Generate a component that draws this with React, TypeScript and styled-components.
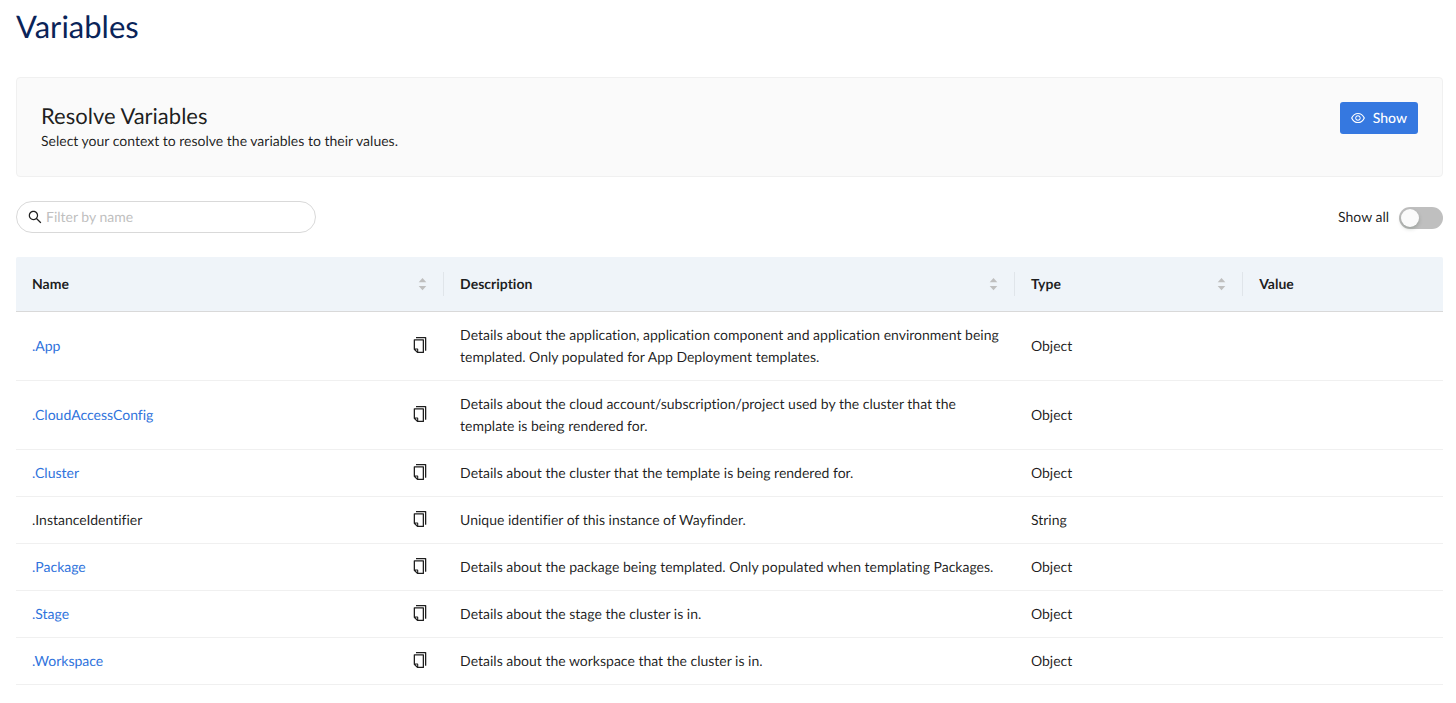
import React, { useState } from "react";
import styled, { createGlobalStyle } from "styled-components";

const GlobalStyle = createGlobalStyle`
  *, *::before, *::after { box-sizing: border-box; }
  body {
    margin: 0;
    background: #fff;
    color: rgba(0, 0, 0, 0.88);
    font-family: Lato, "Liberation Sans", sans-serif;
    font-size: 14px;
    line-height: 22px;
    text-rendering: geometricPrecision;
    font-variant-ligatures: no-common-ligatures;
  }
`;

const Page = styled.main`
  padding: 7px 13px 18px 16px;
`;

const Title = styled.h1`
  margin: 0 0 32px;
  color: #0a2459;
  font-size: 31px;
  font-weight: 400;
  line-height: 38px;
`;

const Panel = styled.section`
  display: flex;
  justify-content: space-between;
  align-items: flex-start;
  padding: 24px;
  border: 1px solid #f0f0f0;
  border-radius: 4px;
  background: #fafafa;
`;

const PanelTitle = styled.h2`
  margin: 0;
  font-size: 22px;
  font-weight: 400;
  line-height: 28px;
`;

const PanelText = styled.p`
  margin: 0;
`;

const PrimaryButton = styled.button`
  display: flex;
  align-items: center;
  gap: 8px;
  height: 32px;
  padding: 0 11px;
  border: 0;
  border-radius: 3px;
  background: #3578e0;
  color: #fff;
  font: inherit;
  font-weight: 500;
  text-rendering: inherit;
  cursor: pointer;
`;

const Toolbar = styled.div`
  display: flex;
  justify-content: space-between;
  align-items: center;
  margin: 24px 0;
`;

const SearchBox = styled.label`
  display: flex;
  align-items: center;
  gap: 4px;
  width: 300px;
  height: 32px;
  padding: 0 11px;
  border: 1px solid #d9d9d9;
  border-radius: 16px;
`;

const SearchInput = styled.input`
  flex: 1;
  min-width: 0;
  padding: 0;
  border: 0;
  outline: 0;
  background: transparent;
  color: inherit;
  font: inherit;
  text-rendering: inherit;

  &::placeholder {
    color: #bfbfbf;
    opacity: 1;
  }
`;

const SwitchLabel = styled.label`
  display: flex;
  align-items: center;
  gap: 10px;
`;

const Switch = styled.input`
  appearance: none;
  width: 44px;
  height: 22px;
  margin: 2px 0 0;
  padding: 2px;
  border-radius: 11px;
  background: #bfbfbf;
  cursor: pointer;

  &::before {
    content: "";
    display: block;
    width: 18px;
    height: 18px;
    border-radius: 9px;
    background: #fafafa;
    box-shadow: 0 2px 4px rgba(0, 35, 11, 0.2);
  }

  &:checked {
    background: #3578e0;
  }

  &:checked::before {
    margin-left: 22px;
  }
`;

const Table = styled.table`
  width: 100%;
  table-layout: fixed;
  border-collapse: separate;
  border-spacing: 0;
`;

const Column = styled.col<{ $share: number }>`
  width: ${({ $share }) => $share}%;
`;

const HeadCell = styled.th`
  padding: 0;
  border-bottom: 1px solid #d9d9d9;
  background: #eff4f9;
  text-align: left;
  font-weight: 700;

  &:first-child { border-top-left-radius: 2px; }
  &:last-child { border-top-right-radius: 2px; }
`;

const HeadContent = styled.div<{ $divided: boolean }>`
  display: flex;
  justify-content: space-between;
  align-items: center;
  height: 24px;
  margin: 15px 0;
  padding: 0 16px;
  border-right: ${({ $divided }) => ($divided ? "1px solid #e0e5ea" : "0")};
`;

const SortButton = styled.button`
  display: flex;
  padding: 0;
  border: 0;
  background: transparent;
  color: #bfbfbf;
  cursor: pointer;
`;

const Cell = styled.td`
  padding: 12px 16px;
  border-bottom: 1px solid #f0f0f0;
`;

const DescriptionCell = styled(Cell)`
  padding-right: 8px;
`;

const NameContent = styled.div`
  display: flex;
  justify-content: space-between;
  align-items: center;
  height: 22px;
`;

const VariableLink = styled.a`
  color: #2f73dc;
  text-decoration: none;
`;

const CopyButton = styled.button`
  display: flex;
  padding: 0 0 2px;
  border: 0;
  background: transparent;
  color: inherit;
  cursor: pointer;
`;

const iconPaths = {
  copy: "M832 64H296c-4.4 0-8 3.6-8 8v56c0 4.4 3.6 8 8 8h496v688c0 4.4 3.6 8 8 8h56c4.4 0 8-3.6 8-8V96c0-17.7-14.3-32-32-32zM704 192H192c-17.7 0-32 14.3-32 32v530.7c0 8.5 3.4 16.6 9.4 22.6l173.3 173.3c2.2 2.2 4.7 4 7.4 5.5v1.9h4.2c3.5 1.3 7.2 2 11 2H704c17.7 0 32-14.3 32-32V224c0-17.7-14.3-32-32-32zM350 856.2L263.9 770H350v86.2zM664 888H414V746c0-22.1-17.9-40-40-40H232V264h432v624z",
  eye: "M942.2 486.2C847.4 286.5 704.1 186 512 186c-192.2 0-335.4 100.5-430.2 300.3a60.3 60.3 0 0 0 0 51.5C176.6 737.5 319.9 838 512 838c192.2 0 335.4-100.5 430.2-300.3 7.7-16.2 7.7-35 0-51.5zM512 766c-161.3 0-279.4-81.8-362.7-254C232.6 339.8 350.7 258 512 258c161.3 0 279.4 81.8 362.7 254C791.5 684.2 674.5 766 512 766zm-4-430c-97.2 0-176 78.8-176 176s78.8 176 176 176 176-78.8 176-176-78.8-176-176-176zm0 288c-61.9 0-112-50.1-112-112s50.1-112 112-112 112 50.1 112 112-50.1 112-112 112z",
  search: "M909.6 854.5L649.9 594.8C690.2 542.7 712 479 712 412c0-80.2-31.3-155.4-87.9-212.1-56.6-56.7-132-87.9-212.1-87.9s-155.5 31.3-212.1 87.9C143.2 256.5 112 331.8 112 412c0 80.1 31.3 155.5 87.9 212.1C256.5 680.8 331.8 712 412 712c67 0 130.6-21.8 182.7-62l259.7 259.6a8.2 8.2 0 0 0 11.6 0l43.6-43.5a8.2 8.2 0 0 0 0-11.6zM570.4 570.4C528 612.7 471.8 636 412 636s-116-23.3-158.4-65.6C211.3 528 188 471.8 188 412s23.3-116.1 65.6-158.4C296 211.3 352.2 188 412 188s116.1 23.2 158.4 65.6S636 352.2 636 412s-23.3 116.1-65.6 158.4z",
};

function Icon({ name, size }: { name: keyof typeof iconPaths; size: number }) {
  return (
    <svg viewBox="64 64 896 896" width={size} height={size} fill="currentColor" aria-hidden="true">
      <path d={iconPaths[name]} />
    </svg>
  );
}

function SortIcon() {
  return (
    <svg viewBox="0 0 9 14" width="9" height="14" fill="currentColor" aria-hidden="true">
      <path d="M4.5 1 L8.3 5.2 H0.7 Z" />
      <path d="M0.7 9 H8.3 L4.5 13.2 Z" />
    </svg>
  );
}

const columns = [
  { title: "Name", share: 30, sortable: true },
  { title: "Description", share: 40, sortable: true },
  { title: "Type", share: 16, sortable: true },
  { title: "Value", share: 14, sortable: false },
];

const variables = [
  {
    name: ".App",
    description:
      "Details about the application, application component and application environment being templated. Only populated for App Deployment templates.",
    type: "Object",
  },
  {
    name: ".CloudAccessConfig",
    description:
      "Details about the cloud account/subscription/project used by the cluster that the template is being rendered for.",
    type: "Object",
  },
  { name: ".Cluster", description: "Details about the cluster that the template is being rendered for.", type: "Object" },
  { name: ".InstanceIdentifier", description: "Unique identifier of this instance of Wayfinder.", type: "String" },
  {
    name: ".Package",
    description: "Details about the package being templated. Only populated when templating Packages.",
    type: "Object",
  },
  { name: ".Stage", description: "Details about the stage the cluster is in.", type: "Object" },
  { name: ".Workspace", description: "Details about the workspace that the cluster is in.", type: "Object" },
];

export default function App() {
  const [filter, setFilter] = useState("");
  const [showAll, setShowAll] = useState(false);
  const rows = variables.filter((v) => v.name.toLowerCase().includes(filter.toLowerCase()));

  return (
    <Page>
      <GlobalStyle />
      <Title>Variables</Title>
      <Panel>
        <div>
          <PanelTitle>Resolve Variables</PanelTitle>
          <PanelText>Select your context to resolve the variables to their values.</PanelText>
        </div>
        <PrimaryButton type="button">
          <Icon name="eye" size={14} />
          Show
        </PrimaryButton>
      </Panel>
      <Toolbar>
        <SearchBox>
          <Icon name="search" size={14} />
          <SearchInput
            type="text"
            aria-label="Filter by name"
            placeholder="Filter by name"
            value={filter}
            onChange={(e) => setFilter(e.target.value)}
          />
        </SearchBox>
        <SwitchLabel>
          Show all
          <Switch type="checkbox" role="switch" checked={showAll} onChange={(e) => setShowAll(e.target.checked)} />
        </SwitchLabel>
      </Toolbar>
      <Table>
        <colgroup>
          {columns.map((c) => (
            <Column key={c.title} $share={c.share} />
          ))}
        </colgroup>
        <thead>
          <tr>
            {columns.map((c) => (
              <HeadCell key={c.title} scope="col">
                <HeadContent $divided={c.sortable}>
                  {c.title}
                  {c.sortable && (
                    <SortButton type="button" aria-label={`Sort by ${c.title}`}>
                      <SortIcon />
                    </SortButton>
                  )}
                </HeadContent>
              </HeadCell>
            ))}
          </tr>
        </thead>
        <tbody>
          {rows.map((v) => (
            <tr key={v.name}>
              <Cell>
                <NameContent>
                  {v.type === "Object" ? <VariableLink href={`#${v.name}`}>{v.name}</VariableLink> : <span>{v.name}</span>}
                  <CopyButton type="button" aria-label={`Copy ${v.name}`}>
                    <Icon name="copy" size={16} />
                  </CopyButton>
                </NameContent>
              </Cell>
              <DescriptionCell>{v.description}</DescriptionCell>
              <Cell>{v.type}</Cell>
              <Cell />
            </tr>
          ))}
        </tbody>
      </Table>
    </Page>
  );
}
